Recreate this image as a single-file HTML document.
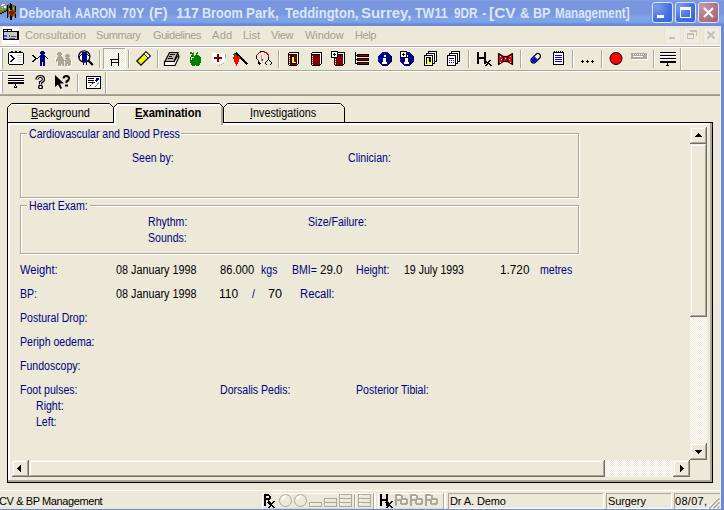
<!DOCTYPE html>
<html><head><meta charset="utf-8">
<style>
*{margin:0;padding:0;box-sizing:border-box}
html,body{width:724px;height:510px;overflow:hidden;background:#ECE9D8;font-family:"Liberation Sans",sans-serif}
.a{position:absolute}
.t{position:absolute;font-size:12px;line-height:14px;white-space:nowrap;transform:scaleX(.88);transform-origin:0 0;color:#000080}
.k{color:#000}
#title{left:0;top:0;width:724px;height:26px;background:linear-gradient(#84A4E6 0px,#7A96DF 1px,#7A96DF 14px,#7EA3E6 17px,#7EA2E6 22px,#6E8BD9 24px,#6A86D6 26px)}
.tt{position:absolute;top:5px;font-size:14px;font-weight:bold;color:#DCE6F8;line-height:17px;white-space:nowrap;transform-origin:0 0}
.cap{top:2px;width:21px;height:21px;border:1px solid #DCE5FA;border-radius:3px}
#frameR{left:721px;top:26px;width:3px;height:484px;background:#6F88DA}
#frameR2{left:720px;top:26px;width:1px;height:484px;background:#F4F2EA}
#frameB{left:0;top:509px;width:724px;height:1px;background:#6F88DA}
.menu{position:absolute;top:29px;font-size:11px;line-height:13px;color:#A29F90;letter-spacing:-0.4px;white-space:nowrap}
.hl{position:absolute;height:1px}
.vl{position:absolute;width:1px}
.chk{background-color:#fff;background-image:linear-gradient(45deg,#ECE9D8 25%,transparent 25%,transparent 75%,#ECE9D8 75%),linear-gradient(45deg,#ECE9D8 25%,transparent 25%,transparent 75%,#ECE9D8 75%);background-size:2px 2px;background-position:0 0,1px 1px}
.btn{position:absolute;background:#ECE9D8;box-shadow:inset -1px -1px #716F64,inset 1px 1px #F1EFE2,inset -2px -2px #ACA899,inset 2px 2px #fff}
.sb{position:absolute;font-size:11px;line-height:13px;color:#000;white-space:nowrap;letter-spacing:-0.4px}
.sunk{position:absolute;border-top:1px solid #ACA899;border-left:1px solid #ACA899;border-bottom:1px solid #fff;border-right:1px solid #fff}
</style></head><body>

<!-- title bar -->
<div id="title" class="a"></div>
<svg class="a" style="left:0;top:0" width="18" height="24" shape-rendering="crispEdges">
<path d="M1 4h5v1h1v1h1v3h-2v1h-3v1h-3v-7h1z" fill="#8c8c8c"/>
<path d="M2 4h3v1h-3zM1 5h2v1h-2zM4 6h2v2h-2z" fill="#f0f0f0"/><path d="M3 5h1v1h-1zM2 7h1v1h-1z" fill="#c8c8c8"/>
<path d="M0 7h1v2h-1z" fill="#20d020"/>
<path d="M0 10h3v-1h3v-1h2v2h-2v1h-2v1h-2v1h-2z" fill="#7a7a10"/>
<path d="M0 13h2v-1h2v-1h2v-1h2v1h-2v1h-2v1h-2v1h-2z" fill="#000"/>
<path d="M8 4h2v2h-2zM12 5h3v2h-3z" fill="#6b6b00"/>
<path d="M7 5h1v13h-1zM10 3h1v17h-1zM11 4h1v16h-1zM15 6h1v12h-1zM9 6h1v2h-1z" fill="#000"/>
<path d="M8 6h1v11h-1zM12 7h1v3h-1zM14 7h1v10h-1z" fill="#6b6b00"/>
<path d="M8 12h1v-1h1v-1h2v-1h1v1h1v1h1v1h1v2h-1v1h-1v1h-1v1h-1v-1h-1v-1h-1v-1h-1v-1h-1z" fill="#6b6b00"/>
<path d="M9 12h1v-1h2v-1h1v1h1v1h1v1h-1v1h-1v1h-1v1h-1v-1h-1v-1h-1v-1h-1z" fill="#9a0a00"/>
</svg>
<div class="tt" style="left:19.0px;transform:scaleX(0.910)">Deborah</div><div class="tt" style="left:75.0px;transform:scaleX(0.802)">AARON</div><div class="tt" style="left:122.0px;transform:scaleX(0.901)">70Y</div><div class="tt" style="left:149.1px;transform:scaleX(1.040)">(F)</div><div class="tt" style="left:175.5px;transform:scaleX(1.021)">117</div><div class="tt" style="left:202.1px;transform:scaleX(0.901)">Broom</div><div class="tt" style="left:246.3px;transform:scaleX(0.956)">Park,</div><div class="tt" style="left:285.0px;transform:scaleX(0.929)">Teddington,</div><div class="tt" style="left:361.1px;transform:scaleX(1.068)">Surrey,</div><div class="tt" style="left:414.5px;transform:scaleX(0.891)">TW11</div><div class="tt" style="left:453.5px;transform:scaleX(0.836)">9DR</div><div class="tt" style="left:481.5px;transform:scaleX(0.929)">-</div><div class="tt" style="left:488.8px;transform:scaleX(1.105)">[CV</div><div class="tt" style="left:520.0px;transform:scaleX(0.929)">&amp;</div><div class="tt" style="left:533.0px;transform:scaleX(0.901)">BP</div><div class="tt" style="left:555.4px;transform:scaleX(0.826)">Management]</div>
<div class="a cap" style="left:652px;background:radial-gradient(circle at 20% 20%,#7C9CF0,#4470E2 60%,#3A62D6)"><div class="a" style="left:4px;top:12px;width:7px;height:3px;background:#fff"></div></div>
<div class="a cap" style="left:675px;background:radial-gradient(circle at 20% 20%,#7C9CF0,#4470E2 60%,#3A62D6)"><div class="a" style="left:4px;top:4px;width:11px;height:11px;border:1px solid #fff;border-top-width:3px"></div></div>
<div class="a cap" style="left:698px;background:radial-gradient(circle at 20% 20%,#C898A4,#B27280 60%,#A8606E)"><svg class="a" style="left:4px;top:4px" width="11" height="11"><path d="M1 1L10 10M10 1L1 10" stroke="#fff" stroke-width="2"/></svg></div>
<div id="frameR" class="a"></div>
<div id="frameR2" class="a"></div>
<div id="frameB" class="a"></div>

<!-- menu -->
<svg class="a" style="left:2px;top:27px" width="17" height="17" shape-rendering="crispEdges"><rect width="17" height="17" fill="#fff"/>
<path d="M1 2h9v2h7v9h-16z" fill="#000"/><path d="M2 5h13v7h-13z" fill="#c4c4c4"/><path d="M2 3h3v1h-3zM6 3h3v1h-3z" fill="#fff"/>
<path d="M2 8h3v2h-3zM2 11h3v1h-3z" fill="#4a4aff"/><path d="M7 8h1v2h-1zM9 9h5v1h-5zM7 11h6v1h-6z" fill="#555"/></svg>
<div class="menu" style="left:25px;letter-spacing:0">Consultation</div>
<div class="menu" style="left:96px">Summary</div>
<div class="menu" style="left:153px">Guidelines</div>
<div class="menu" style="left:212px;letter-spacing:0.3px">Add</div>
<div class="menu" style="left:243px;letter-spacing:0">List</div>
<div class="menu" style="left:271px">View</div>
<div class="menu" style="left:305px;letter-spacing:-0.1px">Window</div>
<div class="menu" style="left:355px">Help</div>
<div class="a" style="left:664px;top:27px;width:17px;height:17px;background:#EFEDE3;border:1px solid #E6E3D5"></div>
<div class="a" style="left:683px;top:27px;width:17px;height:17px;background:#EFEDE3;border:1px solid #E6E3D5"></div>
<div class="a" style="left:703px;top:27px;width:17px;height:17px;background:#EFEDE3;border:1px solid #E6E3D5"></div>
<svg class="a" style="left:664px;top:26px" width="56" height="19" shape-rendering="crispEdges">
<rect x="5" y="11" width="6" height="2" fill="#C4C1B4"/>
<path d="M26 4h7v6h-1v-4h-6z" fill="#C4C1B4"/>
<path d="M23 7h7v6h-7zM24 9v3h5v-3z" fill="#C4C1B4" fill-rule="evenodd"/>
</svg>
<svg class="a" style="left:703px;top:26px" width="17" height="19"><path d="M4.5 5.5L11.5 12.5M11.5 5.5L4.5 12.5" stroke="#C4C1B4" stroke-width="2"/></svg>

<svg class="a" style="left:0;top:0" width="724" height="100">
<g shape-rendering="crispEdges">
<!-- rebar lines -->
<rect x="0" y="45" width="720" height="1" fill="#fff"/>
<rect x="0" y="46" width="720" height="1" fill="#ACA899"/>
<rect x="0" y="47" width="720" height="1" fill="#fff"/>
<rect x="0" y="70" width="720" height="1" fill="#ACA899"/>
<rect x="0" y="71" width="720" height="1" fill="#fff"/>
<rect x="0" y="94" width="720" height="1" fill="#ACA899"/>
<rect x="0" y="95" width="720" height="1" fill="#9D9A8A"/>
<!-- handles -->
<rect x="0" y="48" width="2" height="21" fill="#fff"/><rect x="2" y="48" width="1" height="21" fill="#ACA899"/>
<rect x="0" y="72" width="2" height="21" fill="#fff"/><rect x="2" y="72" width="1" height="21" fill="#ACA899"/>
<!-- band ends -->
<rect x="680" y="48" width="1" height="22" fill="#ACA899"/><rect x="681" y="48" width="1" height="22" fill="#fff"/>
<rect x="105" y="72" width="1" height="22" fill="#ACA899"/><rect x="106" y="72" width="1" height="22" fill="#fff"/>
<!-- separators row1 -->
<path d="M99 50h1v18h-1zM128 50h1v18h-1zM157 50h1v18h-1zM278 50h1v18h-1zM468 50h1v18h-1zM520 50h1v18h-1zM572 50h1v18h-1zM601 50h1v18h-1zM653 50h1v18h-1zM77 74h1v18h-1z" fill="#ACA899"/>
<path d="M100 50h1v18h-1zM129 50h1v18h-1zM158 50h1v18h-1zM279 50h1v18h-1zM469 50h1v18h-1zM521 50h1v18h-1zM573 50h1v18h-1zM602 50h1v18h-1zM654 50h1v18h-1zM78 74h1v18h-1z" fill="#fff"/>
<!-- pressed button -->
<rect x="103" y="48" width="23" height="22" fill="#fff"/>
<rect x="103" y="48" width="22" height="1" fill="#ACA899"/><rect x="103" y="48" width="1" height="21" fill="#ACA899"/>
</g>
<rect x="104" y="49" width="21" height="20" fill="url(#chk)"/>
<defs><pattern id="chk" width="2" height="2" patternUnits="userSpaceOnUse"><rect width="2" height="2" fill="#ECE9D8"/><rect width="1" height="1" fill="#fff"/><rect x="1" y="1" width="1" height="1" fill="#fff"/></pattern></defs>
<g shape-rendering="crispEdges">
<!-- 1 console -->
<path d="M9 52h2v-1h2v1h2v-1h2v1h2v-1h2v1h2v1h1v11h-1v1h-14v-1h-1v-11h1z" fill="#000"/>
<rect x="9" y="53" width="14" height="11" fill="#fff"/>
<path d="M10 55h2v1h1v1h1v1h1v1h-1v1h-1v1h-1v1h-2v-1h1v-1h1v-1h1v-1h-1v-1h-1v-1h-1z" fill="#000"/>
<path d="M17 55h5v1h-5zM17 57h5v1h-5zM17 59h5v1h-5zM17 61h5v1h-5z" fill="#D8D4C0"/>
<!-- 2 arrow person -->
<path d="M32 55h2v1h1v1h1v1h1v1h-1v1h-1v1h-1v1h-2v-1h1v-1h1v-1h1v-1h-1v-1h-1v-1h-1z" fill="#000"/>
<path d="M41 51h3v1h1v2h-1v1h-3v-1h-1v-2h1zM40 55h5v7h-5zM39 56h1v1h-1zM38 57h1v1h-1zM37 58h1v1h-1zM45 56h1v1h-1zM46 57h1v1h-1zM47 58h1v1h-1zM40 62h2v4h-2zM43 62h2v4h-2z" fill="#000080"/>
<!-- 3 family grey -->
<path d="M58 52h3v1h1v2h-1v1h-3v-1h-1v-2h1zM57 56h5v1h1v2h1v1h1v1h-1v5h-2v-2h-1v2h-3v-5h-1v1h-1v-3h1v-2h1z" fill="#ACA899"/>
<path d="M66 54h3v1h1v2h-1v1h-3v-1h-1v-2h1zM65 58h5v2h1v5h-1v1h-2v-2h-1v2h-2v-6h1z" fill="#ACA899"/>
<path d="M55 58h1v3h-1zM58 66h5v1h-5zM66 66h5v1h-5zM71 60h1v6h-1zM64 61h1v1h-1z" fill="#fff"/>
<!-- 4 magnifier person -->
</g>
<circle cx="84.3" cy="56.5" r="5.6" fill="#fff" stroke="#000" stroke-width="1.3"/>
<path d="M88.3 60.5L92.8 65" stroke="#000" stroke-width="2.2"/>
<g shape-rendering="crispEdges">
<path d="M82 52h5v10h-5zM81 54h7v1h-7zM80 55h1v1h-1zM79 56h1v2h-1zM88 55h1v1h-1zM89 56h1v2h-1z" fill="#000080"/>
<path d="M83 62h1v3h-1zM86 62h1v3h-1z" fill="#000080"/>
<!-- 5 chair (pressed) -->
<path d="M118 53h1v13h-1zM110 59h8v1h-8zM111 62h7v1h-7zM111 60h1v6h-1z" fill="#000"/>
<!-- 6 eraser -->
</g>
<polygon points="150.2,56 146,51.8 136.8,61 141,65.2" fill="#F4F000" stroke="#000" stroke-width="1.2"/>
<polygon points="150.2,56 146,51.8 143.9,53.9 148.1,58.1" fill="#fff" stroke="#000" stroke-width="0.8"/>
<!-- 7 book grey -->
<polygon points="164.5,61.5 174,61.5 178.5,55 179,57 175,65.5 164.5,65.5" fill="#fff" stroke="#000" stroke-width="1.2"/>
<polygon points="169.5,52.5 178,52.5 174,61.5 165,61.5" fill="#B8B4A0" stroke="#000" stroke-width="1.2"/>
<g shape-rendering="crispEdges">
<path d="M170 54h5v1h-5zM169 56h3v1h-3zM168 58h5v1h-5z" fill="#000"/>
<!-- 8 apple -->
<path d="M193 52h1v4h-1z" fill="#8B7B00"/>
<path d="M190 52h2v1h1v2h-1v-1h-2zM197 52h1v2h-1v1h-1v-2h1z" fill="#008000"/>
<path d="M190 55h4v1h1v-1h4v1h1v1h1v6h-1v2h-1v1h-3v-1h-1v1h-3v-1h-1v-2h-1v-6h1v-1z" fill="#008000"/>
<path d="M191 57h3v1h-2v2h-1z" fill="#fff"/>
<!-- 9 shield -->
<path d="M212 53h1v-1h1v1h8v-1h1v1h2v8h-1v1h-1v1h-2v1h-2v1h-1v-1h-2v-1h-2v-1h-1v-1h-1v-1z" fill="#fff"/>
<path d="M225 54h1v8h-1v1h-1v1h-2v1h-2v1h-1v-1h2v-1h2v-1h2v-1h1z" fill="#ACA899"/>
<path d="M217 54h2v3h3v2h-3v3h-2v-3h-3v-2h3z" fill="#800000"/>
<!-- 10 carrot -->
<path d="M234 53h1v1h1v-1h1v2h1v1h-4v-1h-1v-1h1z" fill="#008000"/>
<path d="M236 52h1v1h1v1h1v1h1v1h1v1h1v1h1v1h1v1h1v1h1v1h1v1h1v1h-1v1h-1v-1h-1v-1h-1v-1h-1v-1h-1v-1h-1v-1h-1v-1h-1v-1h-1v-1h-1v-1h-1v-1h-1z" fill="#000"/>
<path d="M234 56h5v1h1v2h-1v3h-1v2h-1v2h-1v-2h-1v-2h-1v-3h-1v-2h1z" fill="#f00"/>
<!-- 11 stethoscope -->
<path d="M260 51h5v1h2v1h1v1h1v3h-1v-2h-1v-1h-1v-1h-2v-1h-3v1h-2v1h-1v1h-1v4h1v1h1v1h-1v-1h-1v-1h-1v-4h1v-1h1v-1h1v-1h2z" fill="#f00"/>
<path d="M256 56h1v3h-1zM260 51h4v1h-4z" fill="#000"/>
<path d="M258 61h1v1h1v1h1v1h-1v1h-1v-1h-1z" fill="#000"/>
<path d="M262 55h1v4h-1z" fill="#fff"/><path d="M262 59h1v2h-1z" fill="#f00"/><path d="M261 55h1v6h-1z" fill="#ACA899"/>
<path d="M268 57h1v3h1v1h1v1h1v2h-1v1h-1v-1h1v-2h-1v-1h-1v-1h-1v1h-1v1h-1v2h1v1h-1v-1h-1v-2h1v-1h1v-1h1z" fill="#000"/>
<!-- 12 book L -->
<path d="M288 53h1v12h-1zM289 52h10v1h-10zM298 53h1v11h-1zM289 65h8v1h-8zM297 64h1v1h-1zM289 54h8v1h-8z" fill="#000"/><path d="M289 53h9v1h-9zM297 54h1v10h-1z" fill="#fff"/><rect x="289" y="55" width="8" height="10" fill="#800000"/><rect x="289" y="55" width="1" height="10" fill="#f00"/><path d="M289 56h1v1h-1zM289 58h1v1h-1zM289 60h1v1h-1zM289 62h1v1h-1zM289 64h1v1h-1z" fill="#fff"/><path d="M291 56h3v6h3v2h-6z" fill="#000"/><path d="M292 57h1v5h3v1h-4z" fill="#FFFF00"/><path d="M292 57h2v5h2v1h-4z" fill="#FFFF00"/>
<!-- 13 book -->
<path d="M311 53h1v12h-1zM312 52h10v1h-10zM321 53h1v11h-1zM312 65h8v1h-8zM320 64h1v1h-1zM312 54h8v1h-8z" fill="#000"/><path d="M312 53h9v1h-9zM320 54h1v10h-1z" fill="#fff"/><rect x="312" y="55" width="8" height="10" fill="#800000"/><rect x="312" y="55" width="1" height="10" fill="#f00"/><path d="M312 56h1v1h-1zM312 58h1v1h-1zM312 60h1v1h-1zM312 62h1v1h-1zM312 64h1v1h-1z" fill="#fff"/>
<!-- 14 book plus -->
<path d="M334 53h1v12h-1zM335 52h10v1h-10zM344 53h1v11h-1zM335 65h8v1h-8zM343 64h1v1h-1zM335 54h8v1h-8z" fill="#000"/><path d="M335 53h9v1h-9zM343 54h1v10h-1z" fill="#fff"/><rect x="335" y="55" width="8" height="10" fill="#800000"/><rect x="335" y="58" width="1" height="7" fill="#f00"/><path d="M335 59h1v1h-1zM335 61h1v1h-1zM335 63h1v1h-1z" fill="#fff"/>
<rect x="331" y="51" width="7" height="7" fill="#000"/><rect x="332" y="52" width="5" height="5" fill="#fff"/>
<path d="M334 53h1v1h1v1h-1v1h-1v-1h-1v-1h1z" fill="#000"/>
<!-- 15 tree list -->
<path d="M355 52h1v12h-1zM356 55h1v1h-1zM356 59h1v1h-1zM356 63h1v1h-1z" fill="#000"/>
<path d="M356 54h1v1h-1zM356 58h1v1h-1zM356 62h1v1h-1z" fill="#fff"/>
<path d="M357 54h12v3h-12zM357 58h12v3h-12zM357 62h12v3h-12z" fill="#000"/>
<path d="M358 55h10v1h-10zM358 59h10v1h-10zM358 63h10v1h-10z" fill="#9a0000"/>
<!-- 16 info -->
<path d="M382 52h6v1h1v1h1v1h1v1h1v6h-1v1h-1v1h-1v1h-1v1h-6v-1h-1v-1h-1v-1h-1v-1h-1v-6h1v-1h1v-1h1v-1h1z" fill="#000080"/>
<path d="M382 52h6v1h-6zM378 56h1v6h-1zM379 55h1v1h-1z" fill="#0000ff"/>
<path d="M384 55h2v2h-2zM383 58h3v4h1v2h-5v-2h1v-3h-1z" fill="#fff"/>
<path d="M391 56h1v6h-1zM388 65h-6v1h6z" fill="#000"/>
<!-- 17 info plus -->
<path d="M404 52h6v1h1v1h1v1h1v1h1v6h-1v1h-1v1h-1v1h-1v1h-6v-1h-1v-1h-1v-1h-1v-1h-1v-6h1v-1h1v-1h1v-1h1z" fill="#000080"/>
<path d="M404 52h6v1h-6zM400 56h1v6h-1z" fill="#0000ff"/>
<path d="M406 55h2v2h-2zM405 58h3v4h1v2h-5v-2h1v-3h-1z" fill="#fff"/>
<rect x="400" y="51" width="7" height="7" fill="#000"/><rect x="401" y="52" width="5" height="5" fill="#fff"/>
<path d="M403 53h1v1h1v1h-1v1h-1v-1h-1v-1h1z" fill="#000"/>
<!-- 18 stacked L -->
<rect x="428" y="51" width="9" height="11" fill="#000"/><rect x="429" y="52" width="7" height="9" fill="#fff"/>
<rect x="426" y="53" width="9" height="11" fill="#000"/><rect x="427" y="54" width="7" height="9" fill="#fff"/>
<rect x="424" y="55" width="9" height="11" fill="#000"/><rect x="425" y="56" width="7" height="9" fill="#fff"/>
<rect x="426" y="57" width="5" height="7" fill="#000"/><path d="M427 58h2v4h2v2h-4z" fill="#FFFF00"/><path d="M429 57h2v1h-2zM429 59h1v1h-1z" fill="#0000c0"/>
<!-- 19 stacked lines -->
<rect x="451" y="51" width="9" height="11" fill="#000"/><rect x="452" y="52" width="7" height="9" fill="#fff"/>
<rect x="449" y="53" width="9" height="11" fill="#000"/><rect x="450" y="54" width="7" height="9" fill="#fff"/>
<rect x="447" y="55" width="9" height="11" fill="#000"/><rect x="448" y="56" width="7" height="9" fill="#fff"/>
<path d="M449 58h5v1h-5zM449 60h1v1h-1zM451 60h1v1h-1zM453 60h1v1h-1zM449 62h1v1h-1zM451 62h1v1h-1zM453 62h1v1h-1z" fill="#0000c0"/>
<!-- 20 Hx -->
<path d="M477 52h2v5h5v-5h2v12h-2v-5h-5v5h-2z" fill="#000"/>
<path d="M484 60h2v1h1v1h1v-1h1v-1h2v1h-1v1h-1v1h1v1h1v1h1v1h-2v-1h-1v-1h-1v1h-1v1h-2v-1h1v-1h1v-1h-1v-1h-1z" fill="#000"/>
<!-- 21 bow tie -->
</g>
<polygon points="498.5,53.5 505,57.5 505,60.5 498.5,64.5" fill="#f00" stroke="#000" stroke-width="1.2" stroke-linejoin="round"/>
<polygon points="512.5,53.5 506,57.5 506,60.5 512.5,64.5" fill="#f00" stroke="#000" stroke-width="1.2" stroke-linejoin="round"/>
<rect x="503.5" y="56.5" width="4" height="5" fill="#f00" stroke="#000" stroke-width="1.2"/>
<!-- 22 pill -->
<g transform="translate(535.7,58.3) rotate(-45)">
<path d="M-3,-2.6H3A2.6,2.6 0 0 1 3,2.6H-3A2.6,2.6 0 0 1 -3,-2.6Z" fill="#fff" stroke="#000" stroke-width="1.3"/>
<path d="M0.5,-2H-3A2,2 0 0 0 -3,2H0.5Z" fill="#0000ff"/>
</g>
<g shape-rendering="crispEdges">
<path d="M500 56h1v1h-1zM501 59h1v1h-1zM500 62h1v1h-1zM505 58h1v1h-1zM510 56h1v1h-1zM509 59h1v1h-1zM510 62h1v1h-1z" fill="#fff"/>
<!-- 23 notepad -->
<path d="M553 52h11v13h-11z" fill="#000"/>
<rect x="554" y="53" width="9" height="11" fill="#fff"/>
<path d="M554 51h1v1h-1zM556 51h1v1h-1zM558 51h1v1h-1zM560 51h1v1h-1zM562 51h1v1h-1z" fill="#000"/>
<path d="M555 55h7v1h-7zM555 57h7v1h-7zM555 59h7v1h-7zM555 61h7v1h-7z" fill="#0000ff"/>
<!-- 24 dots -->
<path d="M582 60h1v1h1v1h-1v1h-1v-1h-1v-1h1zM587 60h1v1h1v1h-1v1h-1v-1h-1v-1h1zM592 60h1v1h1v1h-1v1h-1v-1h-1v-1h1z" fill="#000"/>
<!-- 26 keyboard -->
<rect x="631" y="53" width="16" height="6" fill="#ACA899"/>
<path d="M633 54h1v1h-1zM635 54h1v1h-1zM637 54h1v1h-1zM639 54h1v1h-1zM641 54h1v1h-1zM643 54h1v1h-1zM633 56h10v1h-10zM632 59h16v1h-16zM647 54h1v5h-1z" fill="#fff"/>
<!-- 27 lines -->
<path d="M660 52h16v1h-16zM660 55h16v1h-16zM660 58h16v1h-16zM660 61h16v2h-16zM667 63h1v2h-1zM666 65h3v1h-3z" fill="#000"/>
<path d="M660 53h16v1h-16zM660 56h16v1h-16zM660 59h16v1h-16z" fill="#fff"/>
<!-- row2: lines -->
<path d="M8 75h16v1h-16zM8 78h16v1h-16zM8 80h16v1h-16zM8 82h16v2h-16zM15 84h1v2h-1zM14 86h3v2h-3z" fill="#000"/>
<path d="M8 76h16v1h-16zM8 79h16v1h-16zM8 81h16v1h-16zM15 86h1v1h-1z" fill="#fff"/>
<!-- row2: ? -->
</g>
<path d="M37 79.5Q37 76.5 40.5 76.5Q43.5 76.5 43.5 79.2Q43.5 81.2 40.5 82.5L40.5 84.5" fill="none" stroke="#000" stroke-width="3.2"/>
<path d="M37 79.5Q37 76.5 40.5 76.5Q43.5 76.5 43.5 79.2Q43.5 81.2 40.5 82.5L40.5 84.5" fill="none" stroke="#fff" stroke-width="1"/>
<rect x="38" y="85" width="5" height="4" rx="1.5" fill="#000"/><rect x="39.5" y="86" width="2" height="2" fill="#fff"/>
<polygon points="55,75 55,87 58,84.5 60.5,89 62,88.2 60,83.5 64,83.5" fill="#000"/>
<path d="M63.5 78.5Q63.5 76 66.5 76Q69 76 69 78.5Q69 80.2 66.5 81.5L66.5 83" fill="none" stroke="#000" stroke-width="2"/>
<rect x="65" y="84.5" width="3" height="2" fill="#000"/>
<g shape-rendering="crispEdges">
<!-- row2: checklist -->
<rect x="86" y="76" width="15" height="13" fill="#000"/>
<rect x="87" y="77" width="13" height="11" fill="#fff"/>
<path d="M88 78h6v1h-6zM88 80h6v1h-6zM88 82h6v1h-6z" fill="#000"/>
<path d="M96 78h3v2h-1v1h-1v1h-1v-1h-1v-1h1zM94 82h1v1h-1z" fill="#0000c0"/>
<path d="M90 85h1v-1h1v-1h1v1h-1v1h-1v1h-2z" fill="#000"/><path d="M89 86h1v1h-1zM91 84h1v1h-1z" fill="#C0C000"/>
<path d="M97 83h1v-1h1v2h-1v1h-1v1h-1v-1h1z" fill="#A0A0A0"/><path d="M95 86h1v1h-1z" fill="#f00"/>
</g>
<!-- red circle -->
<circle cx="616" cy="58.5" r="6" fill="#f00" stroke="#000" stroke-width="1"/>
</svg>

<!-- tabs + panel -->
<svg class="a" style="left:0;top:0" width="724" height="490">
<g fill="none" stroke="#fff" stroke-width="1">
<path d="M8.5 122V108L12 104.5H109"/>
<path d="M224.5 122V108L228 104.5H340"/>
</g>
<g shape-rendering="crispEdges">
<rect x="8" y="123" width="2" height="359" fill="#fff"/>
<rect x="8" y="123" width="108" height="2" fill="#fff"/>
<rect x="222" y="123" width="490" height="2" fill="#fff"/>
<rect x="710" y="123" width="2" height="359" fill="#ACA899"/>
<rect x="8" y="480" width="704" height="2" fill="#ACA899"/>
<rect x="7" y="122" width="1" height="361" fill="#000"/>
<rect x="712" y="122" width="1" height="361" fill="#000"/>
<rect x="7" y="482" width="706" height="1" fill="#000"/>
<rect x="7" y="122" width="107" height="1" fill="#000"/>
<rect x="223" y="122" width="490" height="1" fill="#000"/>
<rect x="114" y="107" width="2" height="18" fill="#fff"/>
<rect x="117" y="104" width="103" height="2" fill="#fff"/>
<rect x="221" y="107" width="2" height="18" fill="#ACA899"/>
</g>
<path d="M115 108L118 105" stroke="#fff" stroke-width="2"/>
<g fill="none" stroke="#000" stroke-width="1">
<path d="M7.5 122V107.5L11.5 103.5H109.5L113.5 107.5V122"/>
<path d="M113.5 107.5L117.5 103.5H219.5L223.5 107.5V122"/>
<path d="M223.5 107.5L227.5 103.5H340.5L344.5 107.5V122"/>
</g>

<g shape-rendering="crispEdges" fill="#000">
<rect x="31" y="118" width="7" height="1"/>
<rect x="135" y="118" width="8" height="1"/>
<rect x="250" y="118" width="2" height="1"/>
</g>
</svg>
<div class="t k" style="left:31px;top:106px;transform:scaleX(.92)">Background</div>
<div class="t k" style="left:135px;top:106px;font-weight:bold;transform:scaleX(.93)">Examination</div>
<div class="t k" style="left:250px;top:106px;transform:scaleX(.9)">Investigations</div>

<!-- group boxes -->
<div class="a" style="left:20px;top:133px;width:559px;height:65px;border:1px solid #ACA899;box-shadow:inset 1px 1px #fff,1px 1px #fff"></div>
<div class="a" style="left:27px;top:127px;width:154px;height:13px;background:#ECE9D8"></div>
<div class="t" style="left:29px;top:127px">Cardiovascular and Blood Press</div>
<div class="t" style="left:132px;top:151px">Seen by:</div>
<div class="t" style="left:348px;top:151px">Clinician:</div>

<div class="a" style="left:20px;top:205px;width:559px;height:49px;border:1px solid #ACA899;box-shadow:inset 1px 1px #fff,1px 1px #fff"></div>
<div class="a" style="left:27px;top:199px;width:63px;height:13px;background:#ECE9D8"></div>
<div class="t" style="left:29px;top:199px">Heart Exam:</div>
<div class="t" style="left:148px;top:215px">Rhythm:</div>
<div class="t" style="left:148px;top:231px">Sounds:</div>
<div class="t" style="left:308px;top:215px">Size/Failure:</div>

<!-- rows -->
<div class="t" style="left:20px;top:263px;transform:scaleX(.93)">Weight:</div>
<div class="t k" style="left:116px;top:263px;transform:scaleX(.9)">08 January 1998</div>
<div class="t k" style="left:220px;top:263px;transform:scaleX(.93)">86.000</div>
<div class="t" style="left:261px;top:263px">kgs</div>
<div class="t" style="left:292px;top:263px">BMI=</div>
<div class="t k" style="left:320px;top:263px;transform:scaleX(.96)">29.0</div>
<div class="t" style="left:356px;top:263px">Height:</div>
<div class="t k" style="left:404px;top:263px">19 July 1993</div>
<div class="t k" style="left:500px;top:263px;transform:scaleX(.98)">1.720</div>
<div class="t" style="left:540px;top:263px">metres</div>

<div class="t" style="left:20px;top:287px">BP:</div>
<div class="t k" style="left:116px;top:287px;transform:scaleX(.9)">08 January 1998</div>
<div class="t k" style="left:219px;top:287px;transform:scaleX(1)">110</div>
<div class="t" style="left:252px;top:287px">/</div>
<div class="t k" style="left:268px;top:287px;transform:scaleX(1.05)">70</div>
<div class="t" style="left:300px;top:287px;transform:scaleX(.94)">Recall:</div>

<div class="t" style="left:20px;top:311px">Postural Drop:</div>
<div class="t" style="left:20px;top:335px">Periph oedema:</div>
<div class="t" style="left:20px;top:359px">Fundoscopy:</div>
<div class="t" style="left:20px;top:383px">Foot pulses:</div>
<div class="t" style="left:220px;top:383px">Dorsalis Pedis:</div>
<div class="t" style="left:356px;top:383px">Posterior Tibial:</div>
<div class="t" style="left:36px;top:399px">Right:</div>
<div class="t" style="left:36px;top:415px">Left:</div>

<!-- scrollbars -->
<div class="a chk" style="left:690px;top:127px;width:17px;height:333px"></div>
<div class="btn" style="left:690px;top:127px;width:17px;height:17px"></div>
<div class="btn" style="left:690px;top:144px;width:17px;height:173px"></div>
<div class="btn" style="left:690px;top:443px;width:17px;height:17px"></div>
<div class="a chk" style="left:12px;top:460px;width:678px;height:17px"></div>
<div class="btn" style="left:12px;top:460px;width:17px;height:17px"></div>
<div class="btn" style="left:29px;top:460px;width:576px;height:17px"></div>
<div class="btn" style="left:673px;top:460px;width:17px;height:17px"></div>

<svg class="a" style="left:0;top:0" width="724" height="490" shape-rendering="crispEdges"><g fill="#000">
<path d="M698 133h1v1h1v1h1v1h1v1h-7v-1h1v-1h1v-1h1z"/>
<path d="M695 450h7v1h-1v1h-1v1h-1v1h-1v-1h-1v-1h-1v-1h-1z"/>
<path d="M17 468h1v-1h1v-1h1v-1h1v7h-1v-1h-1v-1h-1v-1h-1z"/>
<path d="M680 465h1v1h1v1h1v1h1v1h-1v1h-1v1h-1v1h-1z"/>
</g></svg>
<!-- status bar -->
<svg class="a" style="left:0;top:484px" width="724" height="26">
<g shape-rendering="crispEdges">
<rect x="0" y="6" width="720" height="1" fill="#fff"/><rect x="262" y="24" width="186" height="1" fill="#DCD8C8"/>
<!-- toolbar 1 -->
<rect x="262" y="9" width="112" height="1" fill="#fff"/><rect x="262" y="9" width="1" height="16" fill="#fff"/>
<rect x="373" y="9" width="1" height="16" fill="#ACA899"/><rect x="374" y="9" width="2" height="16" fill="#fff"/>
<path d="M264 10h2v12h-2zM266 10h3v2h-3zM269 11h1v1h1v3h-1v1h-1zM266 14h3v2h-3zM268 16h1v1h-1z" fill="#000"/>
<path d="M268 17h2v1h1v1h1v-1h1v-1h2v1h-1v1h-1v1h-1v1h1v1h1v1h1v1h-2v-1h-1v-1h-1v1h-1v1h-2v-1h1v-1h1v-1h-1v-1h-1v-1h-1z" fill="#000"/>
</g>
<circle cx="285.5" cy="16.5" r="6" fill="none" stroke="#ACA899" stroke-width="1"/>
<circle cx="300.5" cy="16.5" r="6" fill="none" stroke="#ACA899" stroke-width="1"/>
<path d="M282 15.5L286 11.5L283 13z" fill="#fff" stroke="#fff" stroke-width="1.2"/>
<path d="M297 15.5L301 11.5L298 13z" fill="#fff" stroke="#fff" stroke-width="1.2"/>
<g shape-rendering="crispEdges" fill="none" stroke="#ACA899" stroke-width="1">
<rect x="309.5" y="18.5" width="12" height="4"/>
<rect x="324.5" y="14.5" width="12" height="8"/><path d="M324 18.5h13"/>
<rect x="339.5" y="10.5" width="12" height="12"/><path d="M339 14.5h13M339 18.5h13"/>
<rect x="358.5" y="10.5" width="12" height="12"/><path d="M358 14.5h13M358 18.5h13"/>
</g>
<g shape-rendering="crispEdges" fill="#fff">
<path d="M310 19h2v1h-1v1h-1zM325 15h2v1h-1v1h-1zM325 19h2v1h-1v1h-1zM340 11h2v1h-1v1h-1zM340 15h2v1h-1v1h-1zM340 19h2v1h-1v1h-1zM359 11h2v1h-1v1h-1zM359 15h2v1h-1v1h-1zM359 19h2v1h-1v1h-1z"/>
<rect x="355" y="10" width="1" height="14"/>
</g>
<rect x="354" y="10" width="1" height="14" fill="#ACA899" shape-rendering="crispEdges"/>
<!-- toolbar 2 -->
<g shape-rendering="crispEdges">
<rect x="378" y="9" width="66" height="1" fill="#fff"/><rect x="378" y="9" width="1" height="16" fill="#fff"/>
<rect x="443" y="9" width="1" height="16" fill="#ACA899"/><rect x="444" y="9" width="2" height="16" fill="#fff"/>
<path d="M380 10h2v5h4v-5h2v12h-2v-5h-4v5h-2z" fill="#000"/>
<path d="M386 17h2v1h1v1h1v-1h1v-1h2v1h-1v1h-1v1h-1v1h1v1h1v1h1v1h-2v-1h-1v-1h-1v1h-1v1h-2v-1h1v-1h1v-1h-1v-1h-1v-1h-1z" fill="#000"/>
<path d="M395 10h2v12h-2zM397 10h4v2h-4zM401 11h2v5h-2zM397 15h4v2h-4zM402 14h5v2h-5zM406 15h2v5h-2zM400 16h2v4h-2zM401 19h6v2h-6z" fill="#ACA899"/>
<path d="M397 12h4v1h-4zM402 16h4v1h-4zM402 17h1v2h-1z" fill="#fff"/>
<path d="M410 10h2v12h-2zM412 10h4v2h-4zM416 11h2v5h-2zM412 15h4v2h-4zM417 14h5v2h-5zM421 15h2v5h-2zM415 16h2v4h-2zM416 19h6v2h-6z" fill="#ACA899"/>
<path d="M412 12h4v1h-4zM417 16h4v1h-4zM417 17h1v2h-1z" fill="#fff"/>
<path d="M425 10h2v12h-2zM427 10h4v2h-4zM431 11h2v5h-2zM427 15h4v2h-4zM432 14h5v2h-5zM436 15h2v5h-2zM430 16h2v4h-2zM431 19h6v2h-6z" fill="#ACA899"/>
<path d="M427 12h4v1h-4zM432 16h4v1h-4zM432 17h1v2h-1z" fill="#fff"/>
<!-- panels -->
<path d="M448 9h155v1h-154v15h-1zM606 9h65v1h-64v15h-1zM674 9h46v1h-45v15h-1z" fill="#ACA899"/>
<path d="M603 9h1v16h-1zM671 9h1v16h-1zM449 24h155v1h-155zM607 24h65v1h-65zM675 24h45v1h-45z" fill="#fff"/>
</g>
<g stroke="#fff" stroke-width="1"><path d="M707.5 24.5L719.5 12.5M711.5 24.5L719.5 16.5M715.5 24.5L719.5 20.5"/></g>
<g stroke="#ACA899" stroke-width="1.6"><path d="M709.3 24.5L719.5 14.3M713.3 24.5L719.5 18.3M717.3 24.5L719.5 22.3"/></g>
</svg>
<div class="sb" style="left:-1px;top:495px">CV &amp; BP Management</div>
<div class="sb" style="left:450px;top:495px;letter-spacing:-0.1px">Dr A. Demo</div>
<div class="sb" style="left:608px;top:495px;letter-spacing:-0.1px">Surgery</div>
<div class="sb" style="left:675px;top:495px;letter-spacing:0.3px">08/07,</div>

</body></html>
